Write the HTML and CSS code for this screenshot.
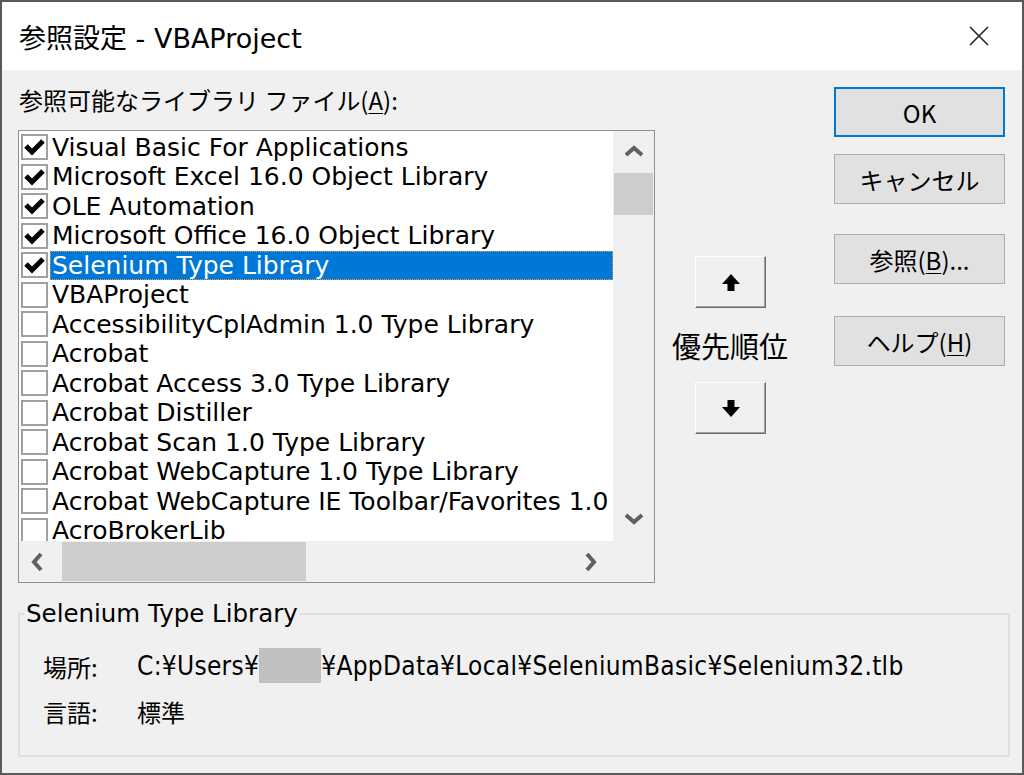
FILE: index.html
```html
<!DOCTYPE html>
<html lang="ja">
<head>
    <meta charset="UTF-8">
    <title>参照設定 - VBAProject</title>
    <link rel="stylesheet" href="styles.css">
</head>
<body>
    <div class="window">
        <div class="titlebar">
            <span class="title">参照設定 - VBAProject</span>
            <svg class="close" width="22" height="22" viewBox="0 0 22 22"><path d="M2 2L20 20M20 2L2 20"/></svg>
        </div>

        <div class="dialog">
            <div class="main">
                <div class="left">
                    <div class="label">参照可能なライブラリ ファイル(<u>A</u>):</div>
                    <div class="listbox">
                        <div class="rows">
                            <div class="row"><span class="check"><svg viewBox="0 0 23 22"><polyline points="3,10 9,16 20,5"/></svg></span><span class="name">Visual Basic For Applications</span></div>
                            <div class="row"><span class="check"><svg viewBox="0 0 23 22"><polyline points="3,10 9,16 20,5"/></svg></span><span class="name">Microsoft Excel 16.0 Object Library</span></div>
                            <div class="row"><span class="check"><svg viewBox="0 0 23 22"><polyline points="3,10 9,16 20,5"/></svg></span><span class="name">OLE Automation</span></div>
                            <div class="row"><span class="check"><svg viewBox="0 0 23 22"><polyline points="3,10 9,16 20,5"/></svg></span><span class="name">Microsoft Office 16.0 Object Library</span></div>
                            <div class="row selected"><span class="check"><svg viewBox="0 0 23 22"><polyline points="3,10 9,16 20,5"/></svg></span><span class="name">Selenium Type Library</span></div>
                            <div class="row"><span class="check"></span><span class="name">VBAProject</span></div>
                            <div class="row"><span class="check"></span><span class="name">AccessibilityCplAdmin 1.0 Type Library</span></div>
                            <div class="row"><span class="check"></span><span class="name">Acrobat</span></div>
                            <div class="row"><span class="check"></span><span class="name">Acrobat Access 3.0 Type Library</span></div>
                            <div class="row"><span class="check"></span><span class="name">Acrobat Distiller</span></div>
                            <div class="row"><span class="check"></span><span class="name">Acrobat Scan 1.0 Type Library</span></div>
                            <div class="row"><span class="check"></span><span class="name">Acrobat WebCapture 1.0 Type Library</span></div>
                            <div class="row"><span class="check"></span><span class="name">Acrobat WebCapture IE Toolbar/Favorites 1.0</span></div>
                            <div class="row"><span class="check"></span><span class="name">AcroBrokerLib</span></div>
                        </div>
                        <div class="vscroll">
                            <svg class="chev up" width="20" height="12" viewBox="0 0 20 12"><polyline points="2,10 10,3 18,10"/></svg>
                            <div class="vthumb"></div>
                            <div class="fill"></div>
                            <svg class="chev down" width="20" height="12" viewBox="0 0 20 12"><polyline points="2,2 10,9 18,2"/></svg>
                        </div>
                        <div class="hscroll">
                            <svg class="chev" width="12" height="20" viewBox="0 0 12 20"><polyline points="10,2 3,10 10,18"/></svg>
                            <div class="hthumb"></div>
                            <div class="fill"></div>
                            <svg class="chev" width="12" height="20" viewBox="0 0 12 20"><polyline points="2,2 9,10 2,18"/></svg>
                        </div>
                        <div class="corner"></div>
                    </div>
                </div>

                <div class="priority">
                    <button class="arrow-btn"><svg width="18" height="17" viewBox="0 0 18 17"><path d="M9 0L18 10H12.5V17H5.5V10H0Z"/></svg></button>
                    <div class="priority-label">優先順位</div>
                    <button class="arrow-btn"><svg width="18" height="17" viewBox="0 0 18 17"><path d="M9 17L18 7H12.5V0H5.5V7H0Z"/></svg></button>
                </div>

                <div class="buttons">
                    <button class="btn default">OK</button>
                    <button class="btn cancel">キャンセル</button>
                    <button class="btn browse">参照(<u>B</u>)...</button>
                    <button class="btn help">ヘルプ(<u>H</u>)</button>
                </div>
            </div>

            <fieldset class="group">
                <legend>Selenium Type Library</legend>
                <div class="info">
                    <span class="key">場所:</span>
                    <span class="path">C:¥Users¥<span class="redact"></span>¥AppData¥Local¥SeleniumBasic¥Selenium32.tlb</span>
                </div>
                <div class="info">
                    <span class="key">言語:</span>
                    <span>標準</span>
                </div>
            </fieldset>
        </div>
    </div>
</body>
</html>
```

FILE: styles.css
```css
* {
    box-sizing: border-box;
}
body {
    margin: 0;
    font-family: "Noto Sans CJK JP", sans-serif;
    color: #000;
    background: #fff;
}
u {
    text-decoration-thickness: 1px;
    text-underline-offset: 3px;
}
.window {
    width: 1024px;
    height: 775px;
    border: 2px solid #595959;
    background: #f0f0f0;
    display: flex;
    flex-direction: column;
}
.titlebar {
    flex: none;
    height: 68px;
    background: #fff;
    display: flex;
    align-items: center;
    justify-content: space-between;
    padding: 0 32px 0 17px;
}
.title {
    font-family: "DejaVu Sans", "Noto Sans CJK JP", sans-serif;
    font-size: 27px;
}
.close {
    fill: none;
    stroke: #222;
    stroke-width: 1.6;
}
.dialog {
    flex: 1;
    padding: 0 13px 0 16px;
}
.main {
    display: flex;
    align-items: flex-start;
    height: 513px;
}
.left {
    width: 637px;
}
.label {
    font-size: 24px;
    line-height: 32px;
    padding: 14px 0 0 1px;
    height: 60px;
}
.listbox {
    width: 637px;
    height: 453px;
    border: 1px solid #8f8f9a;
    display: grid;
    grid-template-columns: 1fr 41px;
    grid-template-rows: 1fr 41px;
    background: #f0f0f0;
}
.rows {
    background: #fff;
    overflow: hidden;
    padding-top: 1.5px;
}
.row {
    display: flex;
    align-items: center;
    height: 29.5px;
    white-space: nowrap;
    font-family: "DejaVu Sans", "Noto Sans CJK JP", sans-serif;
    font-size: 25px;
}
.check {
    flex: none;
    width: 27px;
    height: 26px;
    margin-left: 2px;
    border: 2px solid #a0a0a0;
    background: #fff;
    display: flex;
    align-items: center;
    justify-content: center;
}
.check svg {
    width: 23px;
    height: 22px;
    fill: none;
    stroke: #000;
    stroke-width: 5;
    stroke-linejoin: miter;
}
.name {
    flex: 1;
    margin-left: 2px;
    padding-left: 2px;
    line-height: 29px;
    overflow: hidden;
}
.selected .name {
    background: #0078d7;
    color: #fff;
    outline: 1px dotted #e59a4c;
    outline-offset: -1px;
}
.vscroll {
    display: flex;
    flex-direction: column;
    align-items: center;
}
.vscroll .up {
    margin: 14px 0 12px;
}
.vscroll .down {
    margin: 0 0 16px;
}
.vthumb {
    width: 39px;
    height: 42px;
    background: #cdcdcd;
    margin-top: 4px;
}
.fill {
    flex: 1;
}
.hscroll {
    display: flex;
    align-items: center;
    padding: 0 16px 0 12px;
}
.hthumb {
    width: 244px;
    height: 39px;
    background: #cdcdcd;
    margin-left: 19px;
}
.chev {
    fill: none;
    stroke: #606060;
    stroke-width: 4;
}
.corner {
    background: #f0f0f0;
}
.priority {
    width: 150px;
    display: flex;
    flex-direction: column;
    align-items: center;
    padding-top: 186px;
}
.arrow-btn {
    width: 71px;
    height: 52px;
    background: #f0f0f0;
    border: 1px solid;
    border-color: #fff #6b6b6b #6b6b6b #fff;
    box-shadow: inset -1px -1px 0 #a0a0a0;
    display: flex;
    align-items: center;
    justify-content: center;
    padding: 0;
    margin-left: 1px;
}
.arrow-btn svg {
    fill: #000;
}
.priority-label {
    font-size: 29px;
    line-height: 74px;
}
.buttons {
    margin-left: 29px;
    padding-top: 17px;
    display: flex;
    flex-direction: column;
}
.btn {
    width: 171px;
    height: 50px;
    background: #e1e1e1;
    border: 1px solid #adadad;
    font-family: inherit;
    font-size: 24px;
    color: #000;
    padding: 0;
}
.btn.default {
    border: 2px solid #0078d7;
}
.btn.cancel {
    margin-top: 17px;
}
.btn.browse {
    margin-top: 30px;
}
.btn.help {
    margin-top: 32px;
}
.group {
    margin: 14px 0 0 0;
    width: 992px;
    height: 160px;
    border: 2px solid #dfdfdf;
    padding: 13px 0 0 23px;
}
.group legend {
    font-family: "DejaVu Sans", sans-serif;
    font-size: 24.5px;
    line-height: 34px;
    padding: 0 2px;
    margin-left: -19px;
}
.info {
    display: flex;
    align-items: center;
    font-size: 24px;
    line-height: 45px;
    height: 45px;
}
.key {
    width: 94px;
}
.path {
    font-family: "DejaVu Sans Condensed", "DejaVu Sans", sans-serif;
    font-stretch: condensed;
    font-size: 26px;
    letter-spacing: 0.3px;
}
.redact {
    display: inline-block;
    width: 62px;
    height: 35px;
    background: #c0c0c0;
    vertical-align: -8px;
}
```
